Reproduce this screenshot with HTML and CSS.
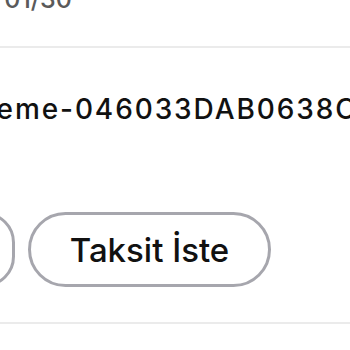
FILE: index.html
```html
<!DOCTYPE html>
<html lang="tr">
<head>
<meta charset="utf-8">
<link rel="stylesheet" href="styles.css">
</head>
<body>
<div class="page">
  <div class="meta">SKT 01/30</div>
  <div class="divider first"></div>
  <div class="ref">Ödeme-046033DAB0638C9F</div>
  <div class="actions">
    <button class="pill pill-prev">Öde</button>
    <button class="pill pill-main">Taksit İste</button>
  </div>
  <div class="divider last"></div>
</div>
</body>
</html>
```
FILE: styles.css
```css
html, body {
  margin: 0;
  padding: 0;
  background: #ffffff;
}
body {
  font-family: Inter, "Noto Sans", sans-serif;
  color: #111111;
  overflow: hidden;
  width: 350px;
  height: 350px;
}
.page {
  margin-left: -46px;
  width: 440px;
  display: flex;
  flex-direction: column;
}
.meta {
  margin-top: -13px;
  height: 24px;
  line-height: 24px;
  font-size: 25px;
  font-weight: 500;
  color: #5a5a5a;
  white-space: nowrap;
  margin-left: -6px;
}
.divider {
  height: 2px;
  background: #ebebeb;
}
.divider.first {
  margin-top: 35px;
}
.ref {
  margin-top: 45px;
  font-size: 28px;
  line-height: 32px;
  font-weight: 500;
  letter-spacing: 1.9px;
  white-space: nowrap;
}
.actions {
  margin-top: 87px;
  display: flex;
  gap: 13px;
}
.pill {
  height: 75px;
  border: 3px solid #a6a6ad;
  border-radius: 40px;
  background: #ffffff;
  font-family: inherit;
  font-size: 33px;
  font-weight: 500;
  color: #111111;
  padding: 0;
  box-sizing: border-box;
}
.pill-prev {
  width: 61px;
  color: transparent;
}
.pill-main {
  width: 243px;
}
.divider.last {
  margin-top: 35px;
}
```
